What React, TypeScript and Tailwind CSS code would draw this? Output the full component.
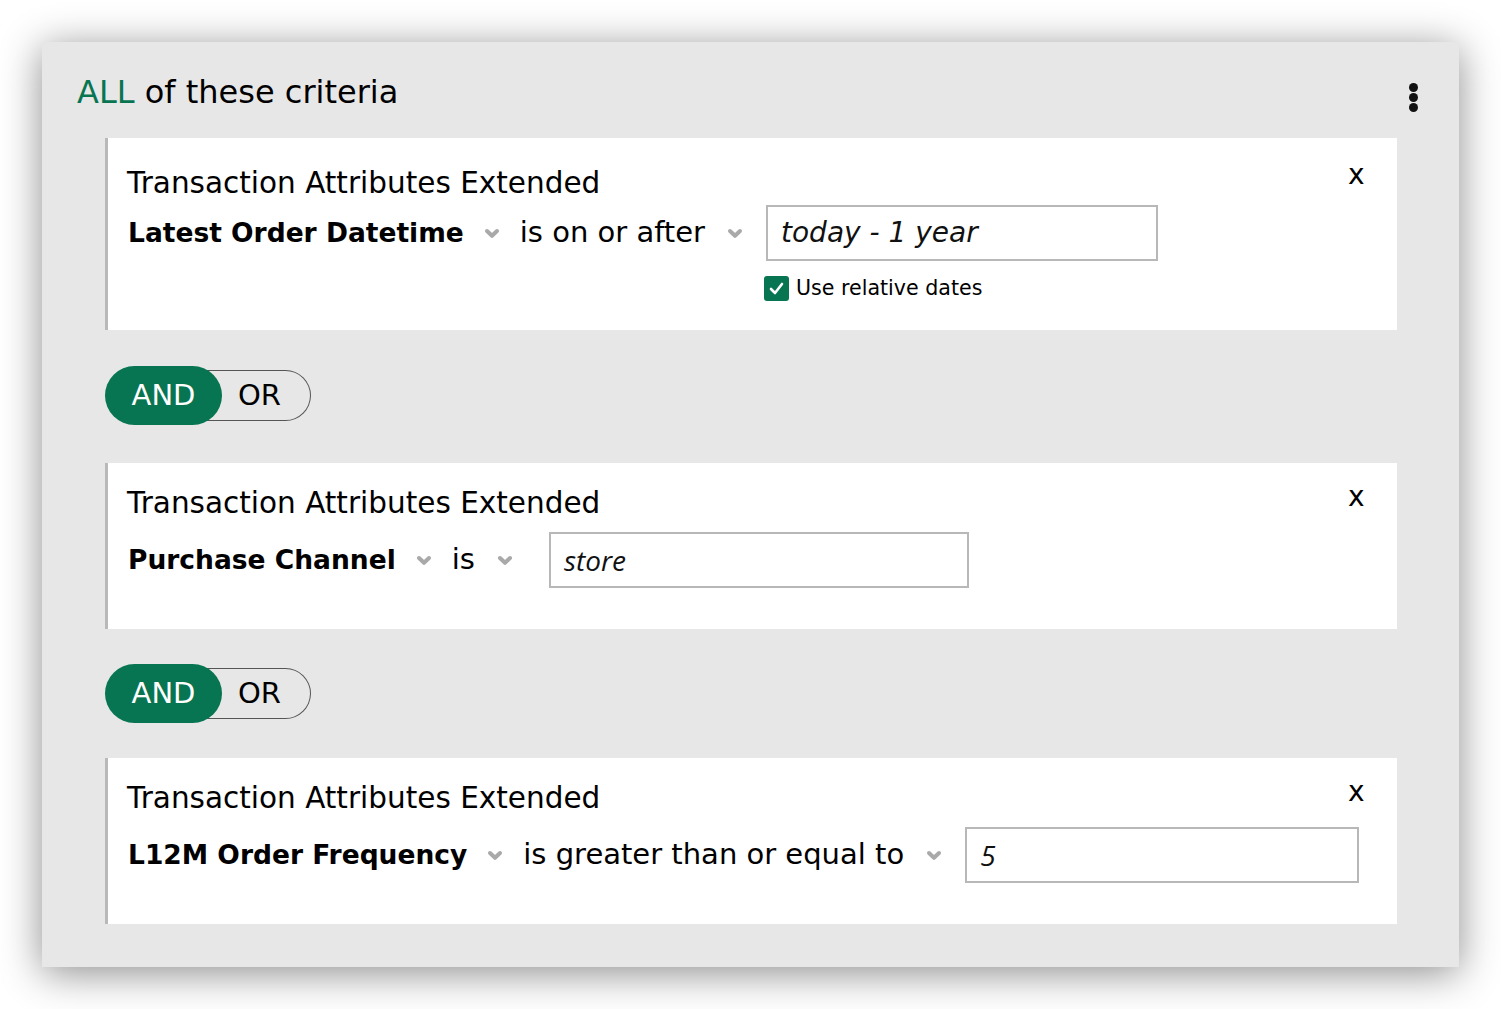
import React from "react";

const GREEN = "bg-[#077551]";

function Chevron() {
  return (
    <svg width="16" height="11" viewBox="0 0 16 11" className="shrink-0">
      <polyline
        points="3,3 8,7.8 13,3"
        fill="none"
        stroke="#a9a9a9"
        strokeWidth="4"
        strokeLinecap="round"
        strokeLinejoin="round"
      />
    </svg>
  );
}

function Kebab() {
  return (
    <div className="flex flex-col items-center gap-[1px]">
      <span className="h-[9px] w-[9px] rounded-full bg-[#111]" />
      <span className="h-[9px] w-[9px] rounded-full bg-[#111]" />
      <span className="h-[9px] w-[9px] rounded-full bg-[#111]" />
    </div>
  );
}

function AndOr() {
  return (
    <div className="flex items-center">
      <div
        className={`z-10 flex h-[59px] w-[117px] items-center justify-center rounded-full ${GREEN} text-[29px] text-white`}
      >
        AND
      </div>
      <div className="-ml-[30px] flex h-[51px] w-[119px] items-center rounded-r-full border border-l-0 border-[#555] pl-[46px] text-[29px] text-black">
        OR
      </div>
    </div>
  );
}

interface CriterionProps {
  field: string;
  op: string;
  value: string;
  valueFont?: "main" | "alt";
  gapAfterOp: string;
  inputW: string;
  relativeDates?: boolean;
}

function Criterion({
  field,
  op,
  value,
  valueFont = "main",
  gapAfterOp,
  inputW,
  relativeDates,
}: CriterionProps) {
  return (
    <div
      className={`flex border-l-[3px] border-[#b9b9b9] bg-white pl-[19px] ${
        relativeDates ? "h-[192px] pt-[25px]" : "h-[166px] pt-[20px]"
      }`}
    >
      <div className="flex min-w-0 flex-1 flex-col">
        <div className="flex h-[40px] items-center whitespace-nowrap text-[29.5px] text-black">
          Transaction Attributes Extended
        </div>
        <div
          className={`flex h-[56px] items-center whitespace-nowrap ${
            relativeDates ? "mt-[2px]" : "mt-[9px]"
          }`}
        >
          <span className="shrink-0 pl-[1px] text-[26.5px] font-bold text-black">{field}</span>
          <span className="mx-[20px]">
            <Chevron />
          </span>
          <span className="shrink-0 text-[29px] text-black">{op}</span>
          <span className={`ml-[22px] ${gapAfterOp}`}>
            <Chevron />
          </span>
          <div
            className={`flex h-[56px] shrink-0 ${inputW} items-center border-2 border-[#b8b8b8] pl-[13px] text-[28px] italic text-[#111] ${
              valueFont === "alt" ? "font-['Open_Sans',sans-serif]" : ""
            }`}
          >
            {value}
          </div>
        </div>
        {relativeDates && (
          <div className="mt-[12px] flex items-center gap-[7px] pl-[637px]">
            <span
              className={`flex h-[25px] w-[25px] items-center justify-center rounded-[3px] ${GREEN}`}
            >
              <svg width="17" height="17" viewBox="0 0 17 17">
                <polyline
                  points="3,9 7,13 14,4"
                  fill="none"
                  stroke="#fff"
                  strokeWidth="2.6"
                  strokeLinecap="round"
                  strokeLinejoin="round"
                />
              </svg>
            </span>
            <span className="text-[20.6px] text-black">Use relative dates</span>
          </div>
        )}
      </div>
      <div className="w-[82px] shrink-0 text-[28px] leading-none text-black">
        <span className={`block pl-[33px] ${relativeDates ? "-mt-[2px]" : ""}`}>x</span>
      </div>
    </div>
  );
}

export default function App() {
  return (
    <div className="min-h-screen bg-white pl-[42px] pt-[42px] font-['DejaVu_Sans',sans-serif]">
      <div className="h-[925px] w-[1417px] bg-[#e7e7e7] shadow-[0_6px_38px_rgba(0,0,0,0.45)]">
        <div className="flex h-[96px] items-start justify-between pl-[35px] pr-[41px] pt-[30px]">
          <div className="text-[32px] leading-[40px] text-black">
            <span className="text-[#077551]">ALL</span> of these criteria
          </div>
          <div className="pt-[11px]">
            <Kebab />
          </div>
        </div>
        <div className="flex flex-col pl-[63px] pr-[62px]">
          <Criterion
            field="Latest Order Datetime"
            op="is on or after"
            value="today - 1 year"
            gapAfterOp="mr-[23px]"
            inputW="w-[392px]"
            relativeDates
          />
          <div className="mb-[38px] mt-[36px]">
            <AndOr />
          </div>
          <Criterion
            field="Purchase Channel"
            op="is"
            value="store"
            valueFont="alt"
            gapAfterOp="mr-[36px]"
            inputW="w-[420px]"
          />
          <div className="mb-[35px] mt-[35px]">
            <AndOr />
          </div>
          <Criterion
            field="L12M Order Frequency"
            op="is greater than or equal to"
            value="5"
            valueFont="alt"
            gapAfterOp="mr-[23px]"
            inputW="w-[394px]"
          />
        </div>
      </div>
    </div>
  );
}
